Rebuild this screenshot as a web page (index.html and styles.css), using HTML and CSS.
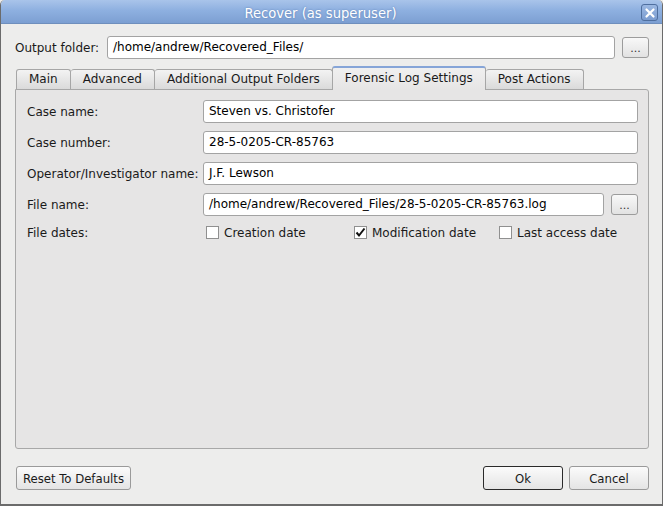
FILE: index.html
```html
<!DOCTYPE html>
<html lang="en">
<head>
    <meta charset="UTF-8">
    <title>Recover (as superuser)</title>
    <link rel="stylesheet" href="styles.css">
</head>
<body>
    <div class="window">
        <div class="titlebar">
            <span class="title">Recover (as superuser)</span>
            <span class="close-btn">
                <svg width="12" height="12" viewBox="0 0 12 12">
                    <path d="M2.5 2.5 L9.5 9.5 M9.5 2.5 L2.5 9.5" stroke="#ffffff" stroke-width="2.2" stroke-linecap="round"/>
                </svg>
            </span>
        </div>

        <div class="content">
            <div class="folder-row">
                <span class="folder-label">Output folder:</span>
                <div class="field">/home/andrew/Recovered_Files/</div>
                <button class="dots">...</button>
            </div>

            <div class="tabs">
                <div class="tab">Main</div>
                <div class="tab">Advanced</div>
                <div class="tab">Additional Output Folders</div>
                <div class="tab active">Forensic Log Settings</div>
                <div class="tab">Post Actions</div>
            </div>

            <div class="panel">
                <div class="form">
                    <span class="label">Case name:</span>
                    <div class="field">Steven vs. Christofer</div>

                    <span class="label">Case number:</span>
                    <div class="field">28-5-0205-CR-85763</div>

                    <span class="label">Operator/Investigator name:</span>
                    <div class="field">J.F. Lewson</div>

                    <span class="label">File name:</span>
                    <div class="file-row">
                        <div class="field">/home/andrew/Recovered_Files/28-5-0205-CR-85763.log</div>
                        <button class="dots">...</button>
                    </div>

                    <span class="label">File dates:</span>
                    <div class="checks">
                        <label class="check"><span class="box"></span>Creation date</label>
                        <label class="check"><span class="box">
                            <svg width="11" height="11" viewBox="0 0 11 11">
                                <path d="M1.5 5.5 L4 8.5 L9.5 1.5" fill="none" stroke="#111" stroke-width="2"/>
                            </svg>
                        </span>Modification date</label>
                        <label class="check"><span class="box"></span>Last access date</label>
                    </div>
                </div>
            </div>

            <div class="footer">
                <button class="btn reset">Reset To Defaults</button>
                <div class="footer-right">
                    <button class="btn ok">Ok</button>
                    <button class="btn cancel">Cancel</button>
                </div>
            </div>
        </div>
    </div>
</body>
</html>
```

FILE: styles.css
```css
html, body {
    margin: 0;
    padding: 0;
}

body {
    font-family: "DejaVu Sans", "Liberation Sans", sans-serif;
    font-size: 12px;
    color: #1a1a1a;
    background-color: #ededec;
}

.window {
    width: 663px;
    height: 506px;
    box-sizing: border-box;
    display: flex;
    flex-direction: column;
    background-color: #ededec;
    border: 1px solid #6b6b6b;
    border-top: none;
    border-radius: 5px 5px 0 0;
    border-bottom-width: 2px;
    overflow: hidden;
}

.titlebar {
    height: 24px;
    flex: none;
    display: flex;
    align-items: center;
    justify-content: center;
    position: relative;
    padding-right: 22px;
    background: linear-gradient(#a9c4ea, #8eb0e0 45%, #7c9fd2);
    border-bottom: 1px solid #6f8fbd;
    box-sizing: border-box;
}

.title {
    font-family: "DejaVu Sans Condensed", "DejaVu Sans", sans-serif;
    font-stretch: condensed;
    font-size: 14.6px;
    color: #ffffff;
    text-shadow: 0 0 2px #5a7cb0;
    padding-top: 2px;
}

.close-btn {
    position: absolute;
    right: 4px;
    top: 4px;
    width: 15px;
    height: 15px;
    border: 1px solid #4f6f9f;
    border-radius: 3px;
    background: linear-gradient(#9bb8e2, #7b9cd0);
    display: flex;
    align-items: center;
    justify-content: center;
}

.content {
    flex: 1;
    display: flex;
    flex-direction: column;
    padding: 12px 13px 14px 14px;
}

.folder-row {
    display: flex;
    align-items: center;
    height: 23px;
}

.folder-label {
    width: 92px;
    flex: none;
}

.field {
    flex: 1;
    height: 23px;
    box-sizing: border-box;
    background-color: #ffffff;
    border: 1px solid #a3a3a3;
    border-radius: 3px;
    padding: 0 5px;
    line-height: 21px;
    color: #000;
    white-space: nowrap;
    overflow: hidden;
}

.dots {
    flex: none;
    width: 27px;
    height: 21px;
    margin-left: 7px;
    padding: 3px 0 0 0;
    font-family: "DejaVu Sans", sans-serif;
    font-size: 11px;
    line-height: 10px;
    color: #333;
    background: linear-gradient(#f8f8f8, #e2e2e2);
    border: 1px solid #9c9c9c;
    border-radius: 3px;
}

.tabs {
    display: flex;
    align-items: flex-end;
    margin-top: 7px;
    padding-left: 1px;
    height: 23px;
    position: relative;
    z-index: 1;
}

.tab {
    height: 20px;
    box-sizing: border-box;
    padding: 0 12px;
    line-height: 19px;
    background: linear-gradient(#f3f3f3, #dadada);
    border: 1px solid #a6a6a6;
    border-bottom: none;
    border-left: none;
    border-radius: 3px 3px 0 0;
}

.tab:first-child {
    border-left: 1px solid #a6a6a6;
}

.tab.active {
    height: 24px;
    margin-bottom: -1px;
    line-height: 21px;
    background: linear-gradient(#f0f0f0, #e6e5e5);
    border-top: 2px solid #86a5d8;
    border-left: 1px solid #a6a6a6;
    margin-left: -1px;
}

.panel {
    flex: 1;
    background-color: #e6e5e5;
    border: 1px solid #a8a8a8;
    border-radius: 0 3px 3px 3px;
    padding: 10px 10px 0 11px;
}

.form {
    display: grid;
    grid-template-columns: 176px 1fr;
    row-gap: 8px;
    align-items: center;
}

.file-row {
    display: flex;
    align-items: center;
}

.checks {
    display: grid;
    grid-template-columns: 148px 145px auto;
    padding-left: 3px;
    height: 17px;
    align-items: center;
}

.check {
    display: flex;
    align-items: center;
}

.box {
    width: 13px;
    height: 13px;
    box-sizing: border-box;
    background-color: #ffffff;
    border: 1px solid #909090;
    margin-right: 5px;
    display: flex;
    align-items: center;
    justify-content: center;
}

.footer {
    display: flex;
    justify-content: space-between;
    margin-top: 17px;
}

.footer-right {
    display: flex;
    gap: 6px;
}

.btn {
    height: 24px;
    font-family: "DejaVu Sans Condensed", "DejaVu Sans", sans-serif;
    font-stretch: condensed;
    font-size: 13px;
    color: #1a1a1a;
    background: linear-gradient(#fbfbfb, #e4e4e4);
    border: 1px solid #9a9a9a;
    border-radius: 3px;
    padding: 0;
    margin: 0;
}

.reset {
    width: 115px;
    margin-left: 1px;
}

.ok {
    width: 80px;
    border-color: #2a2a2a;
}

.cancel {
    width: 80px;
}
```
